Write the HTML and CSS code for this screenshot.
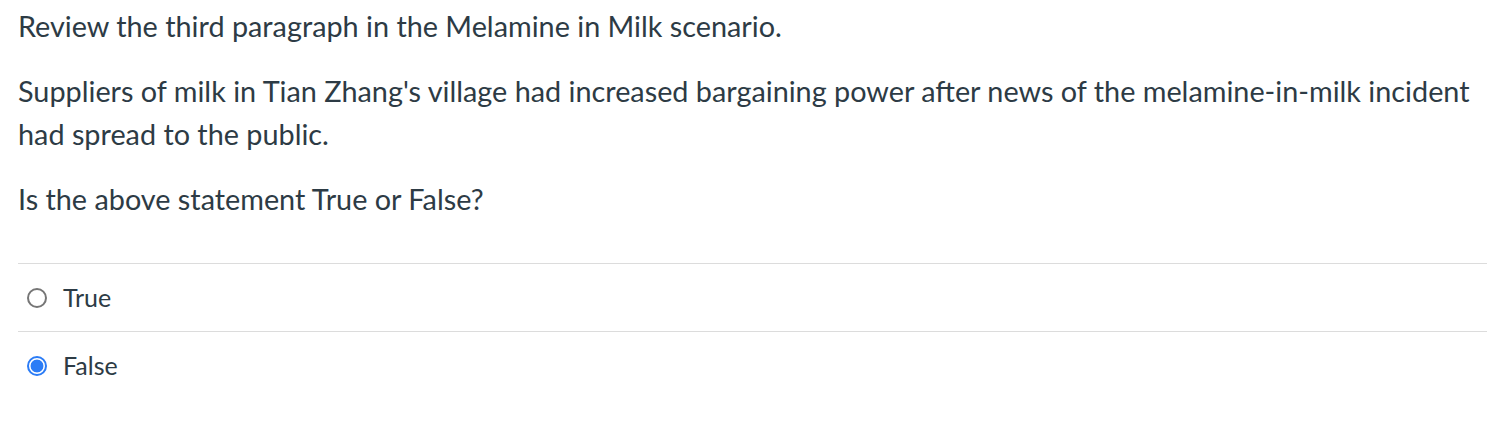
FILE: index.html
```html
<!DOCTYPE html>
<html lang="en">
<head>
<meta charset="utf-8">
<title>Quiz question</title>
<link rel="stylesheet" href="styles.css">
</head>
<body>
<div class="question">
  <div class="question-text">
    <p>Review the third paragraph in the Melamine in Milk scenario.</p>
    <p>Suppliers of milk in Tian Zhang's village had increased bargaining power after news of the melamine-in-milk incident had spread to the public.</p>
    <p>Is the above statement True or False?</p>
  </div>
  <div class="answers">
    <label class="answer">
      <span class="radio"></span>
      <span class="answer-label">True</span>
    </label>
    <label class="answer">
      <span class="radio checked"></span>
      <span class="answer-label">False</span>
    </label>
  </div>
</div>
</body>
</html>
```
FILE: styles.css
```css
html, body {
  margin: 0;
  padding: 0;
  background: #ffffff;
}
body {
  font-family: Lato, "Open Sans", sans-serif;
  color: #2d3b45;
  font-size: 28.8px;
  line-height: 43.5px;
}
.question {
  padding: 5px 11px 0 18px;
}
.question-text p {
  margin: 0 0 21px 0;
}
.question-text p:last-child {
  margin-bottom: 0;
}
.answers {
  margin-top: 42px;
}
.answer {
  display: flex;
  align-items: center;
  gap: 16px;
  height: 67px;
  border-top: 1px solid #dcdcdc;
  padding-left: 9px;
}
.radio {
  width: 16px;
  height: 16px;
  border: 2px solid #767676;
  border-radius: 50%;
  box-sizing: content-box;
  flex: none;
}
.radio.checked {
  border-color: #2b7cf6;
  background: radial-gradient(circle, #2b7cf6 0 6px, #ffffff 6.8px);
}
.answer-label {
  font-size: 25px;
}
```
